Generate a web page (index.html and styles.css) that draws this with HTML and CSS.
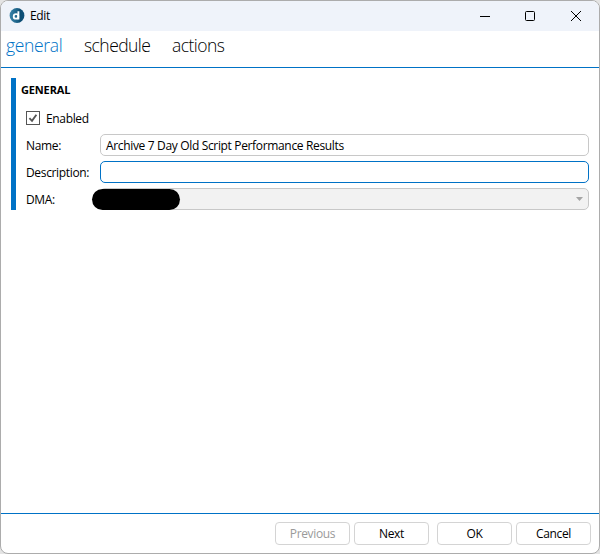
FILE: index.html
```html
<!DOCTYPE html>
<html lang="en">
<head>
<meta charset="utf-8">
<title>Edit</title>
<link rel="stylesheet" href="styles.css">
</head>
<body>
<div class="window">
  <header class="titlebar">
    <svg class="logo" width="16" height="16" viewBox="0 0 16 16">
      <defs><linearGradient id="g" x1="0" x2="1"><stop offset="0" stop-color="#3b83a8"/><stop offset=".55" stop-color="#1a6086"/><stop offset=".7" stop-color="#0b4c72"/><stop offset="1" stop-color="#0d5078"/></linearGradient></defs>
      <circle cx="8" cy="7.5" r="7.4" fill="url(#g)"/>
      <circle cx="7" cy="8.4" r="2.3" fill="none" stroke="#fff" stroke-width="1.8"/>
      <path d="M9.4 3.2V11.6" stroke="#fff" stroke-width="1.9"/>
    </svg>
    <span class="title">Edit</span>
    <svg class="controls" width="102" height="12" viewBox="0 0 102 12" fill="none" stroke="#000">
      <path d="M0 6.5H10"/>
      <rect x="45.5" y="1.5" width="9" height="9" rx="1"/>
      <path d="M91 1L101 11M101 1L91 11" stroke-width="1"/>
    </svg>
  </header>
  <nav class="tabs">
    <span class="tab general active">general</span>
    <span class="tab schedule">schedule</span>
    <span class="tab actions">actions</span>
  </nav>
  <main class="content">
    <section class="group">
      <h1 class="heading">GENERAL</h1>
      <div class="check-row">
        <svg class="check" width="14" height="14" viewBox="0 0 14 14" fill="none">
          <rect x=".5" y=".5" width="13" height="13" fill="#fff" stroke="#555"/>
          <path d="M3.4 7.2L6 9.8L10.4 3.8" stroke="#555" stroke-width="1.9"/>
        </svg>
        <span class="enabled">Enabled</span>
      </div>
      <div class="row"><span class="label">Name:</span><div class="field"><span class="value">Archive 7 Day Old Script Performance Results</span></div></div>
      <div class="row"><span class="label description">Description:</span><div class="field focused"></div></div>
      <div class="row"><span class="label">DMA:</span><div class="field select"><span class="redacted"></span>
        <svg class="arrow" width="7" height="4" viewBox="0 0 7 4"><path d="M0 0H7L3.5 4Z" fill="#a5a5a5"/></svg></div></div>
    </section>
  </main>
  <footer class="footer">
    <div class="button disabled">Previous</div>
    <div class="button">Next</div>
    <div class="button ok">OK</div>
    <div class="button">Cancel</div>
  </footer>
</div>
</body>
</html>
```
FILE: styles.css
```css
* { box-sizing: border-box; }
body {
  margin: 0;
  background: #e4e4e4;
  font: 12px/16px "Open Sans", "Noto Sans", sans-serif;
  letter-spacing: -0.34px;
  color: #000;
}
.window {
  width: 600px;
  height: 554px;
  display: flex;
  flex-direction: column;
  background: #fff;
  border: 1px solid #acacac;
  border-radius: 8px;
  overflow: hidden;
}
.titlebar {
  height: 30px;
  flex: none;
  display: flex;
  align-items: center;
  background: #eff3fa;
  padding: 0 17px 0 8px;
}
.title { margin-left: 5px; }
.controls { margin-left: auto; }
.tabs {
  height: 37px;
  flex: none;
  display: flex;
  border-bottom: 1px solid #0072c6;
  padding-left: 5px;
  font-size: 17.5px;
  line-height: 28px;
  font-weight: 300;
  letter-spacing: -0.55px;
  white-space: nowrap;
}
.general { width: 78px; letter-spacing: -0.35px; }
.schedule { width: 88px; }
.active { color: #0072c6; }
.content { flex: 1; padding: 10px 10px 0; }
.group {
  height: 132px;
  border-left: 5px solid #0072c6;
  padding-left: 5px;
}
.heading {
  margin: 0;
  padding-top: 4px;
  height: 33px;
  font-size: 11px;
  line-height: 16px;
  font-weight: 700;
  letter-spacing: -0.15px;
}
.check-row { height: 23px; display: flex; padding-left: 5px; }
.enabled { margin-left: 6px; line-height: 16px; }
.row {
  display: flex;
  align-items: center;
  height: 22px;
  margin-bottom: 5px;
  padding-left: 5px;
}
.label { width: 74px; flex: none; white-space: nowrap; padding-top: 2px; }
.field {
  flex: 1;
  height: 22px;
  display: flex;
  align-items: center;
  border: 1px solid #c8c8c8;
  border-radius: 5px;
  padding: 0 5px;
}
.value { white-space: nowrap; padding-top: 2px; }
.focused { border-color: #0072c6; }
.select { background: #f2f2f2; }
.redacted {
  width: 88px;
  height: 21px;
  margin-left: -13.6px;
  border-radius: 10.5px;
  background: #000;
}
.arrow { margin-left: auto; }
.footer {
  height: 40px;
  flex: none;
  display: flex;
  justify-content: flex-end;
  gap: 4px;
  padding: 8px 8px 0 0;
  border-top: 1px solid #0072c6;
}
.button {
  width: 75px;
  height: 23px;
  border: 1px solid #d4d4d4;
  border-radius: 4px;
  text-align: center;
  line-height: 22px;
}
.disabled { color: #9a9a9a; }
.ok { margin-left: 4px; }
```
